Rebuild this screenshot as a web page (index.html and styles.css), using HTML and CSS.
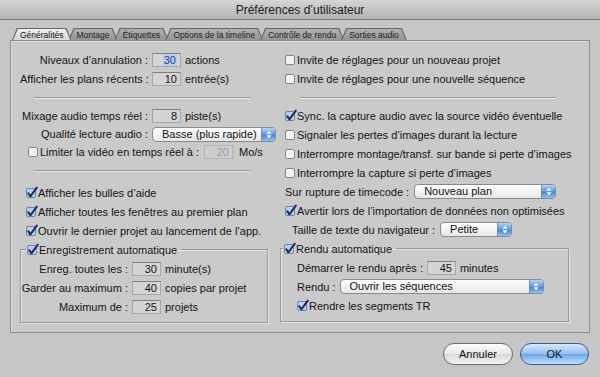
FILE: index.html
```html
<!DOCTYPE html>
<html lang="fr">
<head>
    <meta charset="UTF-8">
    <title>Préférences d’utilisateur</title>
    <link rel="stylesheet" href="styles.css">
</head>
<body>
<div class="window">
    <div class="titlebar">Préférences d’utilisateur</div>

    <div class="tabs">
        <div class="tab active"><span>Généralités</span></div>
        <div class="tab"><span>Montage</span></div>
        <div class="tab"><span>Étiquettes</span></div>
        <div class="tab"><span>Options de la timeline</span></div>
        <div class="tab"><span>Contrôle de rendu</span></div>
        <div class="tab"><span>Sorties audio</span></div>
    </div>

    <div class="panel">
        <!-- left column -->
        <div class="col col-left">
            <div class="row">
                <span class="lbl lbl-main">Niveaux d’annulation :</span>
                <span class="num"><span class="sel">30</span></span>
                <span class="unit">actions</span>
            </div>
            <div class="row">
                <span class="lbl lbl-main">Afficher les plans récents :</span>
                <span class="num">10</span>
                <span class="unit">entrée(s)</span>
            </div>
            <div class="sep"></div>
            <div class="row">
                <span class="lbl lbl-main">Mixage audio temps réel :</span>
                <span class="num">8</span>
                <span class="unit">piste(s)</span>
            </div>
            <div class="row row-short">
                <span class="lbl lbl-main">Qualité lecture audio :</span>
                <span class="popup popup-quality">
                    <span class="popup-text">Basse (plus rapide)</span>
                    <span class="stepper"><svg viewBox="0 0 7 10"><polygon points="0.5,4 3.5,0.5 6.5,4"/><polygon points="0.5,6 3.5,9.5 6.5,6"/></svg></span>
                </span>
            </div>
            <div class="row row-short row-limit">
                <svg class="cb" viewBox="0 0 12 12"><rect class="cb-box" x="0.5" y="1.5" width="9" height="9" rx="1.5"/></svg>
                <span class="lbl-limit">Limiter la vidéo en temps réel à :</span>
                <span class="num off">20</span>
                <span class="unit unit-wide">Mo/s</span>
            </div>
            <div class="sep sep-lower"></div>
            <div class="row check">
                <svg class="cb on" viewBox="0 0 12 12"><rect class="cb-box" x="0.5" y="1.5" width="9" height="9" rx="1.5"/><path class="cb-mark" d="M2.2 6.2 L4.4 9.3 L10.8 0.6"/></svg>
                <span>Afficher les bulles d’aide</span>
            </div>
            <div class="row check">
                <svg class="cb on" viewBox="0 0 12 12"><rect class="cb-box" x="0.5" y="1.5" width="9" height="9" rx="1.5"/><path class="cb-mark" d="M2.2 6.2 L4.4 9.3 L10.8 0.6"/></svg>
                <span>Afficher toutes les fenêtres au premier plan</span>
            </div>
            <div class="row check">
                <svg class="cb on" viewBox="0 0 12 12"><rect class="cb-box" x="0.5" y="1.5" width="9" height="9" rx="1.5"/><path class="cb-mark" d="M2.2 6.2 L4.4 9.3 L10.8 0.6"/></svg>
                <span>Ouvrir le dernier projet au lancement de l’app.</span>
            </div>
            <fieldset class="group group-left">
                <legend>
                    <svg class="cb on" viewBox="0 0 12 12"><rect class="cb-box" x="0.5" y="1.5" width="9" height="9" rx="1.5"/><path class="cb-mark" d="M2.2 6.2 L4.4 9.3 L10.8 0.6"/></svg>
                    <span>Enregistrement automatique</span>
                </legend>
                <div class="row">
                    <span class="lbl lbl-group">Enreg. toutes les :</span>
                    <span class="num">30</span>
                    <span class="unit">minute(s)</span>
                </div>
                <div class="row">
                    <span class="lbl lbl-group">Garder au maximum :</span>
                    <span class="num">40</span>
                    <span class="unit">copies par projet</span>
                </div>
                <div class="row">
                    <span class="lbl lbl-group">Maximum de :</span>
                    <span class="num">25</span>
                    <span class="unit">projets</span>
                </div>
            </fieldset>
        </div>

        <!-- right column -->
        <div class="col col-right">
            <div class="row check">
                <svg class="cb" viewBox="0 0 12 12"><rect class="cb-box" x="0.5" y="1.5" width="9" height="9" rx="1.5"/></svg>
                <span>Invite de réglages pour un nouveau projet</span>
            </div>
            <div class="row check">
                <svg class="cb" viewBox="0 0 12 12"><rect class="cb-box" x="0.5" y="1.5" width="9" height="9" rx="1.5"/></svg>
                <span>Invite de réglages pour une nouvelle séquence</span>
            </div>
            <div class="sep sep-right"></div>
            <div class="row check">
                <svg class="cb on" viewBox="0 0 12 12"><rect class="cb-box" x="0.5" y="1.5" width="9" height="9" rx="1.5"/><path class="cb-mark" d="M2.2 6.2 L4.4 9.3 L10.8 0.6"/></svg>
                <span>Sync. la capture audio avec la source vidéo éventuelle</span>
            </div>
            <div class="row check">
                <svg class="cb" viewBox="0 0 12 12"><rect class="cb-box" x="0.5" y="1.5" width="9" height="9" rx="1.5"/></svg>
                <span>Signaler les pertes d’images durant la lecture</span>
            </div>
            <div class="row check">
                <svg class="cb" viewBox="0 0 12 12"><rect class="cb-box" x="0.5" y="1.5" width="9" height="9" rx="1.5"/></svg>
                <span>Interrompre montage/transf. sur bande si perte d’images</span>
            </div>
            <div class="row check">
                <svg class="cb" viewBox="0 0 12 12"><rect class="cb-box" x="0.5" y="1.5" width="9" height="9" rx="1.5"/></svg>
                <span>Interrompre la capture si perte d’images</span>
            </div>
            <div class="row check">
                <span>Sur rupture de timecode :</span>
                <span class="popup popup-timecode">
                    <span class="popup-text">Nouveau plan</span>
                    <span class="stepper"><svg viewBox="0 0 7 10"><polygon points="0.5,4 3.5,0.5 6.5,4"/><polygon points="0.5,6 3.5,9.5 6.5,6"/></svg></span>
                </span>
            </div>
            <div class="row check">
                <svg class="cb on" viewBox="0 0 12 12"><rect class="cb-box" x="0.5" y="1.5" width="9" height="9" rx="1.5"/><path class="cb-mark" d="M2.2 6.2 L4.4 9.3 L10.8 0.6"/></svg>
                <span>Avertir lors de l’importation de données non optimisées</span>
            </div>
            <div class="row row-indent">
                <span>Taille de texte du navigateur :</span>
                <span class="popup popup-size">
                    <span class="popup-text">Petite</span>
                    <span class="stepper"><svg viewBox="0 0 7 10"><polygon points="0.5,4 3.5,0.5 6.5,4"/><polygon points="0.5,6 3.5,9.5 6.5,6"/></svg></span>
                </span>
            </div>
            <fieldset class="group group-right">
                <legend>
                    <svg class="cb on" viewBox="0 0 12 12"><rect class="cb-box" x="0.5" y="1.5" width="9" height="9" rx="1.5"/><path class="cb-mark" d="M2.2 6.2 L4.4 9.3 L10.8 0.6"/></svg>
                    <span>Rendu automatique</span>
                </legend>
                <div class="row">
                    <span class="lbl">Démarrer le rendu après :</span>
                    <span class="num">45</span>
                    <span class="unit">minutes</span>
                </div>
                <div class="row">
                    <span class="lbl">Rendu :</span>
                    <span class="popup popup-render">
                        <span class="popup-text">Ouvrir les séquences</span>
                        <span class="stepper"><svg viewBox="0 0 7 10"><polygon points="0.5,4 3.5,0.5 6.5,4"/><polygon points="0.5,6 3.5,9.5 6.5,6"/></svg></span>
                    </span>
                </div>
                <div class="row">
                    <svg class="cb on" viewBox="0 0 12 12"><rect class="cb-box" x="0.5" y="1.5" width="9" height="9" rx="1.5"/><path class="cb-mark" d="M2.2 6.2 L4.4 9.3 L10.8 0.6"/></svg>
                    <span>Rendre les segments TR</span>
                </div>
            </fieldset>
        </div>
    </div>

    <div class="footer">
        <div class="btn btn-cancel">Annuler</div>
        <div class="btn btn-ok">OK</div>
    </div>
</div>
</body>
</html>
```

FILE: styles.css
```css
body {
    margin: 0;
    font-family: "Liberation Sans", Arial, sans-serif;
    font-size: 11px;
    color: #141414;
    background-color: #c6c6c6;
}
.window {
    width: 600px;
    height: 377px;
    overflow: hidden;
    background-color: #c6c6c6;
}
.titlebar {
    height: 19px;
    line-height: 20px;
    text-align: center;
    font-size: 12px;
    color: #1a1a1a;
    background: linear-gradient(#d6d6d6, #b2b2b2);
    border-bottom: 1px solid #7c7c7c;
}

/* tabs */
.tabs {
    display: flex;
    height: 12px;
    margin: 8px 0 0 12px;
}
.tab {
    position: relative;
    margin-right: -3px;
    padding: 1px 1px 0;
    background-color: #666;
    clip-path: polygon(5px 0, calc(100% - 5px) 0, 100% 100%, 0 100%);
}
.tab span {
    display: block;
    height: 11px;
    line-height: 12px;
    padding: 0 7px;
    font-size: 8.5px;
    color: #1e1e1e;
    background: linear-gradient(#b0b0b0, #959595);
    clip-path: polygon(5px 0, calc(100% - 5px) 0, 100% 100%, 0 100%);
}
.tab.active {
    z-index: 2;
}
.tab.active span {
    background: linear-gradient(#f0f0f0, #d6d6d6);
    color: #111;
}

/* main panel */
.panel {
    margin: 0 10px;
    height: 293px;
    box-sizing: border-box;
    border: 1px solid #8f8f8f;
    background-color: #cacaca;
    box-shadow: inset 1px 1px 0 #e0e0e0;
    display: grid;
    grid-template-columns: 269px 1fr;
}
.col-left {
    padding: 9px 0 0 9px;
}
.col-right {
    padding-top: 9px;
}
.row {
    display: flex;
    align-items: center;
    height: 19px;
    white-space: nowrap;
}
.row-short {
    height: 18px;
}
.check {
    padding-left: 6px;
}
.col-right .check {
    padding-left: 5px;
}
.row-indent {
    padding-left: 12px;
}
.row-limit {
    padding-left: 8px;
}
.lbl {
    text-align: right;
    margin-right: 4px;
}
.lbl-main {
    width: 128px;
}
.lbl-group {
    width: 107px;
}
.lbl-limit {
    margin-right: 5px;
}

/* number fields */
.num {
    width: 29px;
    height: 14px;
    box-sizing: border-box;
    border: 1px solid #a8a8a8;
    border-top-color: #808080;
    background-color: #d4d4d4;
    text-align: right;
    padding-right: 3px;
    line-height: 12px;
}
.num.off {
    color: #a0a0a0;
    border-color: #b3b3b3;
    background-color: #cdcdcd;
}
.sel {
    color: #23448a;
    background-color: #b8cff0;
    padding: 0 1px;
}
.unit {
    margin-left: 4px;
}
.unit-wide {
    margin-left: 6px;
}

/* separators */
.sep {
    width: 216px;
    margin: 9px 0 7px 14px;
    border-top: 1px solid #9a9a9a;
    border-bottom: 1px solid #e6e6e6;
}
.sep-lower {
    margin-bottom: 11px;
}
.sep-right {
    width: 255px;
    margin-left: 20px;
}

/* checkboxes */
svg.cb {
    width: 12px;
    height: 12px;
    flex: none;
    overflow: visible;
}
.cb-box {
    fill: #f1f1f1;
    stroke: #858585;
    stroke-width: 1;
}
.cb.on .cb-box {
    fill: #b9d2f1;
    stroke: #6a84ad;
}
.cb-mark {
    fill: none;
    stroke: #1d2d58;
    stroke-width: 2;
    stroke-linecap: round;
    stroke-linejoin: round;
}

/* popup menus */
.popup {
    display: flex;
    align-items: center;
    height: 15px;
    box-sizing: border-box;
    border: 1px solid #8a8a8a;
    border-radius: 4px;
    background: linear-gradient(#ffffff, #e6e6e6);
    overflow: hidden;
}
.col-right .popup {
    margin-left: 5px;
}
.group .popup {
    margin-left: 0;
}
.popup-text {
    flex: 1;
    padding-left: 9px;
    line-height: 13px;
}
.popup-quality {
    width: 124px;
}
.popup-timecode {
    width: 142px;
}
.popup-size {
    width: 72px;
}
.popup-render {
    width: 204px;
}
.stepper {
    width: 13px;
    height: 100%;
    display: flex;
    align-items: center;
    justify-content: center;
    border-left: 1px solid #6c8fc2;
    background: linear-gradient(#b3d3f7, #5c98e0 50%, #3d80d4 51%, #90c3f4);
}
.stepper svg {
    width: 6px;
    height: 9px;
    fill: #ffffff;
}

/* group boxes */
.group {
    margin: 0;
    padding: 0 0 6px;
    min-width: 0;
    box-sizing: border-box;
    border: 1px solid #9a9a9a;
    box-shadow: 1px 1px 0 #e4e4e4, inset 1px 1px 0 #e4e4e4;
}
.group legend {
    display: flex;
    align-items: center;
    height: 19px;
    margin-left: 5px;
    padding: 0 4px 0 1px;
}
.group-left {
    width: 248px;
}
.group-right {
    width: 289px;
}
.group-right legend {
    margin-left: 2px;
}
.group-right .row {
    padding-left: 16px;
}

/* buttons */
.footer {
    display: flex;
    justify-content: flex-end;
    gap: 7px;
    padding: 10px 11px 0 0;
}
.btn {
    height: 22px;
    box-sizing: border-box;
    border-radius: 11px;
    border: 1px solid #6c6c6c;
    display: flex;
    align-items: center;
    justify-content: center;
    background: linear-gradient(#fdfdfd 0%, #e8e8e8 50%, #d8d8d8 51%, #f4f4f4 100%);
}
.btn-cancel {
    width: 70px;
}
.btn-ok {
    width: 69px;
    border-color: #3e5c8e;
    background: linear-gradient(#d8e8fa 0%, #92bfef 50%, #6ca5e6 51%, #bde0fd 100%);
}
```
